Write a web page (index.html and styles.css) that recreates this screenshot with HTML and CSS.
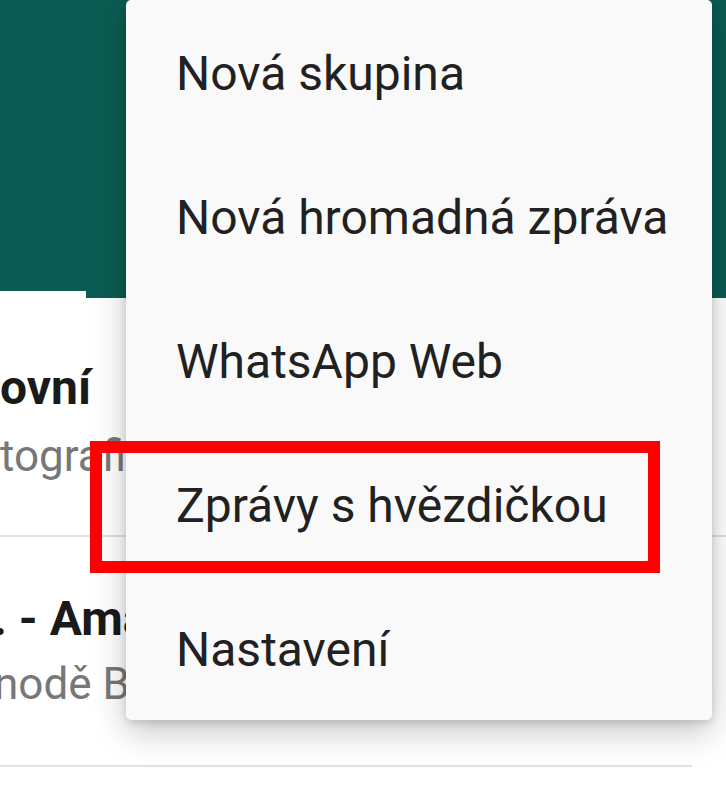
FILE: index.html
```html
<!DOCTYPE html>
<html lang="cs">
<head>
<meta charset="utf-8">
<title>WhatsApp menu</title>
<link rel="stylesheet" href="styles.css">
</head>
<body>
<div class="screen">
  <header class="appbar">
    <div class="tabs">
      <div class="tab-indicator"></div>
    </div>
  </header>
  <main class="chats">
    <div class="chat chat-first">
      <div class="chat-title">ovní</div>
      <div class="chat-sub">tografie</div>
    </div>
    <div class="chat chat-second">
      <div class="chat-title shift-title">. - Ama</div>
      <div class="chat-sub shift-sub">nodě Ba</div>
    </div>
  </main>
  <nav class="menu">
    <div class="menu-item">Nová skupina</div>
    <div class="menu-item">Nová hromadná zpráva</div>
    <div class="menu-item">WhatsApp Web</div>
    <div class="menu-item">Zprávy s hvězdičkou</div>
    <div class="menu-item">Nastavení</div>
  </nav>
  <div class="highlight"></div>
</div>
</body>
</html>
```

FILE: styles.css
```css
* { box-sizing: border-box; }

html, body {
  margin: 0;
  padding: 0;
  background: #ffffff;
}

body {
  font-family: Roboto, "Liberation Sans", Arial, sans-serif;
  color: #212121;
}

.screen {
  position: relative;
  width: 726px;
  height: 810px;
  overflow: hidden;
  background: #ffffff;
}

.appbar {
  height: 298px;
  background: #0b5c52;
  display: flex;
  flex-direction: column;
  justify-content: flex-end;
}

.tabs {
  display: flex;
}

.tab-indicator {
  width: 86px;
  height: 7px;
  background: #ffffff;
}

.chats {
  display: flex;
  flex-direction: column;
}

.chat {
  display: flex;
  flex-direction: column;
  white-space: nowrap;
  overflow: hidden;
  border-bottom: 2px solid #e2e2e2;
}

.chat-first {
  height: 239px;
  padding-top: 60px;
}

.chat-second {
  height: 230px;
  padding-top: 52px;
  margin-right: 34px;
}

.chat-title {
  font-size: 48px;
  line-height: 60px;
  font-weight: 700;
  color: #1a1a1a;
}

.chat-sub {
  font-size: 44px;
  line-height: 60px;
  color: #777777;
  margin-top: 8px;
}

.chat-second .chat-sub {
  margin-top: 5px;
}

.shift-title { margin-left: -7px; }
.shift-sub { margin-left: -6px; }

.menu {
  position: absolute;
  left: 126px;
  top: 0;
  width: 586px;
  height: 720px;
  padding-top: 2px;
  overflow: hidden;
  background: #f9f9f9;
  border-radius: 5px;
  box-shadow: 0 12px 34px rgba(0, 0, 0, 0.22), 0 3px 8px rgba(0, 0, 0, 0.14);
  display: flex;
  flex-direction: column;
}

.menu-item {
  flex: 0 0 144px;
  display: flex;
  align-items: center;
  padding-left: 50px;
  font-size: 48px;
  line-height: 56px;
  color: #212121;
  white-space: nowrap;
}

.highlight {
  position: absolute;
  left: 90px;
  top: 441px;
  width: 570px;
  height: 132px;
  border: 12px solid #ff0000;
}
```
